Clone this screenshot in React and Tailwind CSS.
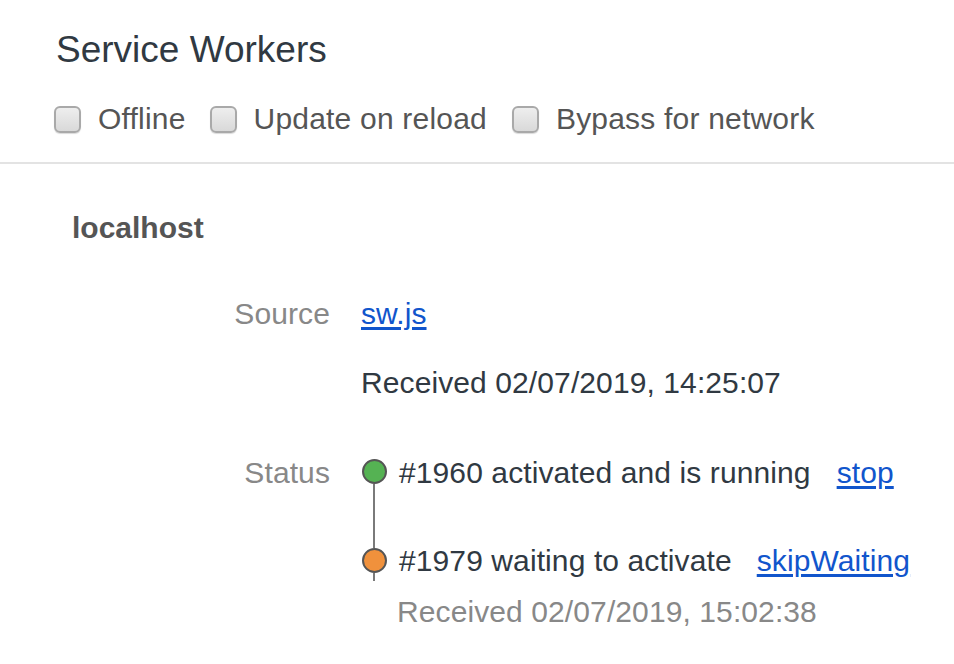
import React from "react";

function Box() {
  return (
    <span className="inline-block w-[27px] h-[27px] shrink-0 rounded-[6px] border-2 border-[#a9a9a9] bg-gradient-to-b from-[#eeeeee] to-[#d9d9d9] shadow-[0_1px_1px_rgba(0,0,0,0.15)]" />
  );
}

function Check({ label, className }) {
  return (
    <div className={"flex items-center " + (className || "")}>
      <Box />
      <span className="ml-[17px] text-[30px] leading-[40px] tracking-[0.2px] text-[#555555]">{label}</span>
    </div>
  );
}

export default function App() {
  return (
    <div
      className="w-[954px] h-[664px] overflow-hidden bg-white"
      style={{ fontFamily: '"Liberation Sans", Arial, sans-serif' }}
    >
      <div className="pl-[56px] pt-[28px]">
        <h1 className="text-[37px] leading-[44px] text-[#303942] font-normal">Service Workers</h1>
        <div className="mt-[27px] -ml-[2px] flex items-center">
          <Check label="Offline" />
          <Check label="Update on reload" className="ml-[24px]" />
          <Check label="Bypass for network" className="ml-[25px]" />
        </div>
      </div>
      <div className="mt-[23px] h-[2px] bg-[#e3e3e3]" />
      <div className="pl-[72px] mt-[44px] text-[30px] leading-[40px] font-bold text-[#555555]">localhost</div>

      <div className="mt-[46px] flex text-[30px] leading-[40px] tracking-[0.1px]">
        <div className="w-[330px] text-right text-[#888888]">Source</div>
        <div className="ml-[31px] flex flex-col">
          <a href="#" className="text-[#1155cc] underline underline-offset-[3px]">sw.js</a>
          <div className="mt-[29px] text-[#303942]">Received 02/07/2019, 14:25:07</div>
        </div>
      </div>

      <div className="mt-[50px] flex text-[30px] leading-[40px] tracking-[0.1px]">
        <div className="w-[330px] text-right text-[#888888]">Status</div>
        <div className="ml-[31px] flex">
          <div className="w-[26px] flex flex-col items-center pt-[6px]">
            <span className="w-[25px] h-[25px] rounded-full border-2 border-[#555555] bg-[#55b253]" />
            <span className="w-[2px] h-[64px] bg-[#7a7a7a]" />
            <span className="w-[25px] h-[25px] rounded-full border-2 border-[#555555] bg-[#f0913c]" />
            <span className="w-[2px] h-[8px] bg-[#7a7a7a]" />
          </div>
          <div className="ml-[12px] flex flex-col">
            <div className="flex text-[#303942]">
              <span>#1960 activated and is running</span>
              <a href="#" className="ml-[26px] text-[#1155cc] underline underline-offset-[3px]">stop</a>
            </div>
            <div className="mt-[48px] flex text-[#303942]">
              <span>#1979 waiting to activate</span>
              <a href="#" className="ml-[25px] text-[#1155cc] underline underline-offset-[3px]">skipWaiting</a>
            </div>
            <div className="mt-[11px] -ml-[2px] text-[#888888]">Received 02/07/2019, 15:02:38</div>
          </div>
        </div>
      </div>
    </div>
  );
}
